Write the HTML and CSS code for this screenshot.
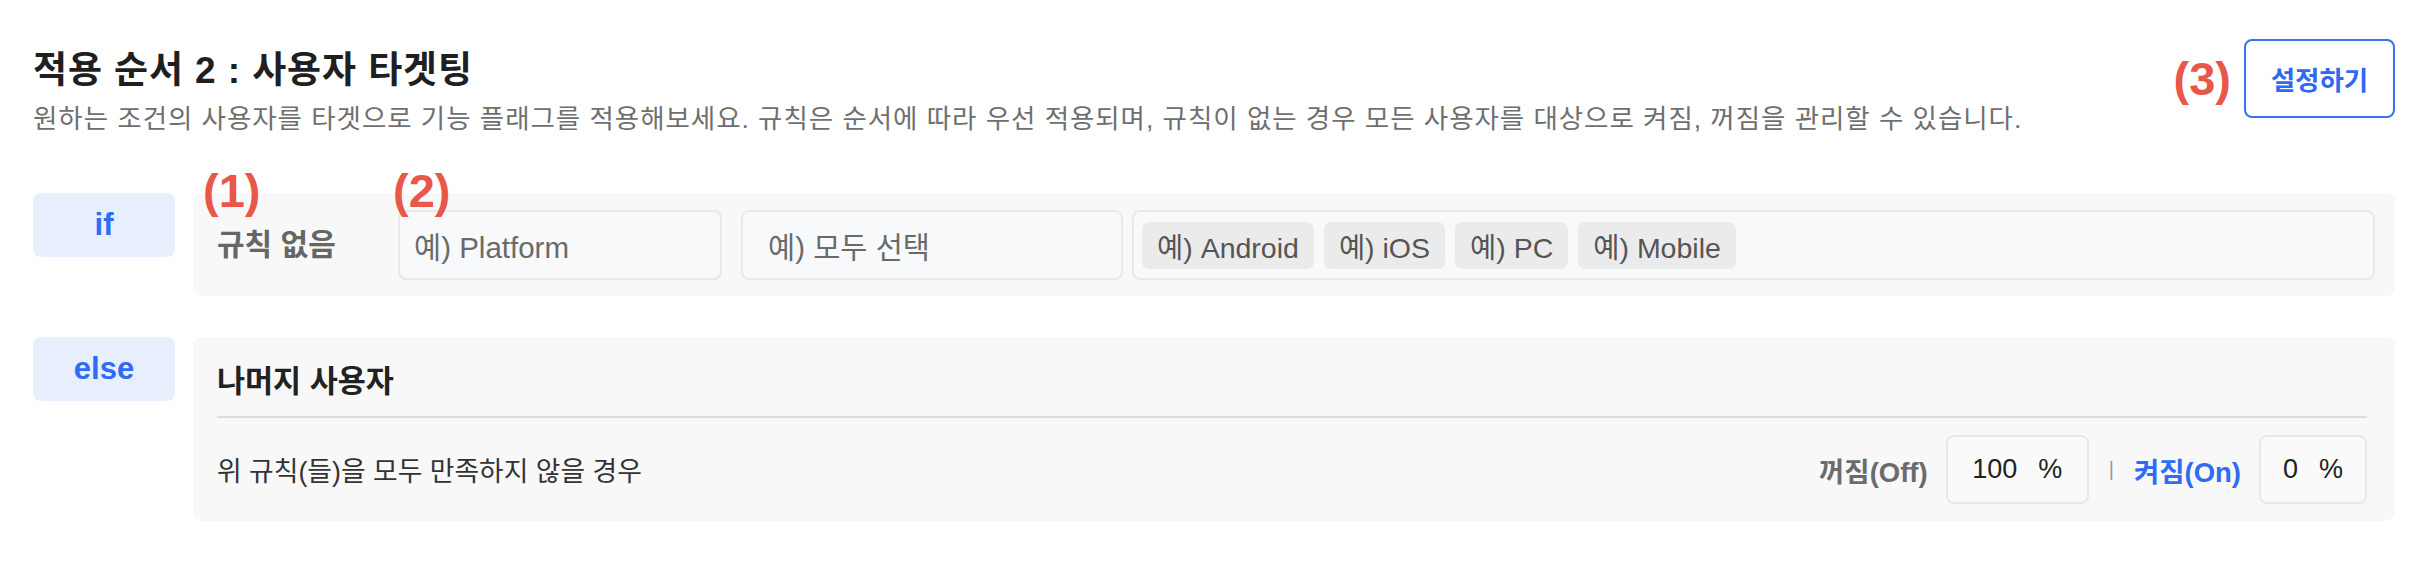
FILE: index.html
```html
<!DOCTYPE html>
<html lang="ko">
<head>
<meta charset="utf-8">
<title>적용 순서 2 : 사용자 타겟팅</title>
<link rel="stylesheet" href="styles.css">
</head>
<body>
<div class="page">
  <header class="header">
    <div class="header-text">
      <h1 class="title">적용 순서 2 : 사용자 타겟팅</h1>
      <p class="desc">원하는 조건의 사용자를 타겟으로 기능 플래그를 적용해보세요. 규칙은 순서에 따라 우선 적용되며, 규칙이 없는 경우 모든 사용자를 대상으로 켜짐, 꺼짐을 관리할 수 있습니다.</p>
    </div>
    <div class="header-actions">
      <span class="mark">(3)</span>
      <button class="btn-setup" type="button">설정하기</button>
    </div>
  </header>

  <section class="rule-row row-if">
    <div class="cond-tag">if</div>
    <div class="panel panel-if">
      <span class="mark mark-1">(1)</span>
      <span class="mark mark-2">(2)</span>
      <div class="rule-label">규칙 없음</div>
      <div class="field field-a">예) Platform</div>
      <div class="field field-b">예) 모두 선택</div>
      <div class="field chips-box">
        <span class="chip">예) Android</span>
        <span class="chip">예) iOS</span>
        <span class="chip">예) PC</span>
        <span class="chip">예) Mobile</span>
      </div>
    </div>
  </section>

  <section class="rule-row row-else">
    <div class="cond-tag">else</div>
    <div class="panel panel-else">
      <div class="else-title">나머지 사용자</div>
      <div class="divider"></div>
      <div class="else-row">
        <div class="else-desc">위 규칙(들)을 모두 만족하지 않을 경우</div>
        <div class="ratio">
          <span class="ratio-label off">꺼짐(Off)</span>
          <div class="pct pct-off"><span class="pct-val">100</span><span class="pct-unit">%</span></div>
          <span class="sep">|</span>
          <span class="ratio-label on">켜짐(On)</span>
          <div class="pct pct-on"><span class="pct-val">0</span><span class="pct-unit">%</span></div>
        </div>
      </div>
    </div>
  </section>
</div>
</body>
</html>
```

FILE: styles.css
```css
* { box-sizing: border-box; }

html, body {
  margin: 0;
  padding: 0;
  background: #ffffff;
}

body {
  font-family: "Liberation Sans", "Noto Sans CJK KR", sans-serif;
  color: #222222;
}

.page {
  padding: 39px 31px 0 33px;
}

/* Header */
.header {
  display: flex;
  justify-content: space-between;
  align-items: flex-start;
}

.title {
  margin: 10px 0 0 0;
  font-size: 37px;
  line-height: 44px;
  font-weight: 700;
  letter-spacing: 0.9px;
  color: #1f1f1f;
  white-space: nowrap;
}

.desc {
  margin: 8px 0 0 0;
  font-size: 26.5px;
  line-height: 36px;
  letter-spacing: 0.95px;
  color: #6f6f6f;
  white-space: nowrap;
}

.header-actions {
  display: flex;
  align-items: center;
  gap: 13px;
}

.mark {
  font-family: "Liberation Sans", sans-serif;
  font-weight: 700;
  font-size: 47px;
  line-height: 47px;
  color: #e9564a;
}

.btn-setup {
  width: 151px;
  height: 79px;
  border: 2px solid #3a70f6;
  border-radius: 8px;
  background: #ffffff;
  color: #2f68f3;
  font-family: "Liberation Sans", "Noto Sans CJK KR", sans-serif;
  font-weight: 700;
  font-size: 26.5px;
  padding: 0;
}

/* Rule rows */
.rule-row {
  display: flex;
  align-items: flex-start;
  gap: 18px;
}

.row-if { margin-top: 56px; }
.row-else { margin-top: 41px; }

.cond-tag {
  flex: 0 0 142px;
  height: 64px;
  border-radius: 8px;
  background: #e8effc;
  color: #2f6bf5;
  font-weight: 700;
  font-size: 31px;
  display: flex;
  align-items: center;
  justify-content: center;
}

.panel {
  flex: 1;
  background: #f8f8f8;
  border-radius: 9px;
}

.panel-if {
  position: relative;
  display: flex;
  align-items: center;
  padding: 17px 20px 16px 24px;
}

.mark-1,
.mark-2 {
  position: absolute;
  top: -26px;
}
.mark-1 { left: 10px; }
.mark-2 { left: 200px; }

.rule-label {
  flex: 0 0 181px;
  font-size: 30px;
  font-weight: 700;
  color: #666666;
  line-height: 40px;
}

.field {
  height: 70px;
  border: 2px solid #e8e8e8;
  border-radius: 8px;
  background: #f8f9fa;
  display: flex;
  align-items: center;
  font-size: 29.5px;
  color: #6a6a6a;
}

.field-a {
  flex: 0 0 324px;
  margin-right: 19px;
  padding-left: 14px;
}

.field-b {
  flex: 0 0 382px;
  margin-right: 9px;
  padding-left: 25px;
}

.chips-box {
  flex: 1;
  padding-left: 8px;
  gap: 10px;
}

.chip {
  height: 47px;
  padding: 0 15px;
  border-radius: 7px;
  background: #ebebeb;
  color: #555555;
  font-size: 28.5px;
  display: flex;
  align-items: center;
}

/* Else panel */
.panel-else {
  padding: 24px 28px 17px 24px;
}

.else-title {
  font-size: 30.5px;
  line-height: 40px;
  font-weight: 700;
  color: #222222;
}

.divider {
  margin-top: 15px;
  height: 2px;
  background: #dcdcdc;
}

.else-row {
  margin-top: 17px;
  display: flex;
  align-items: center;
  justify-content: space-between;
}

.else-desc {
  font-size: 26.8px;
  color: #333333;
}

.ratio {
  display: flex;
  align-items: center;
  gap: 18px;
}

.ratio-label {
  font-size: 27.5px;
  font-weight: 700;
}
.ratio-label.off { color: #6b6b6b; }
.ratio-label.on { color: #2f6bf5; }

.sep {
  color: #9a9a9a;
  font-size: 20px;
  padding: 0 2px;
}

.pct {
  height: 69px;
  border: 2px solid #e8e8e8;
  border-radius: 8px;
  background: #fafafa;
  display: flex;
  align-items: center;
  justify-content: center;
  gap: 21px;
  font-size: 27px;
  color: #222222;
}

.pct-off { width: 143px; }
.pct-on { width: 108px; }
```
